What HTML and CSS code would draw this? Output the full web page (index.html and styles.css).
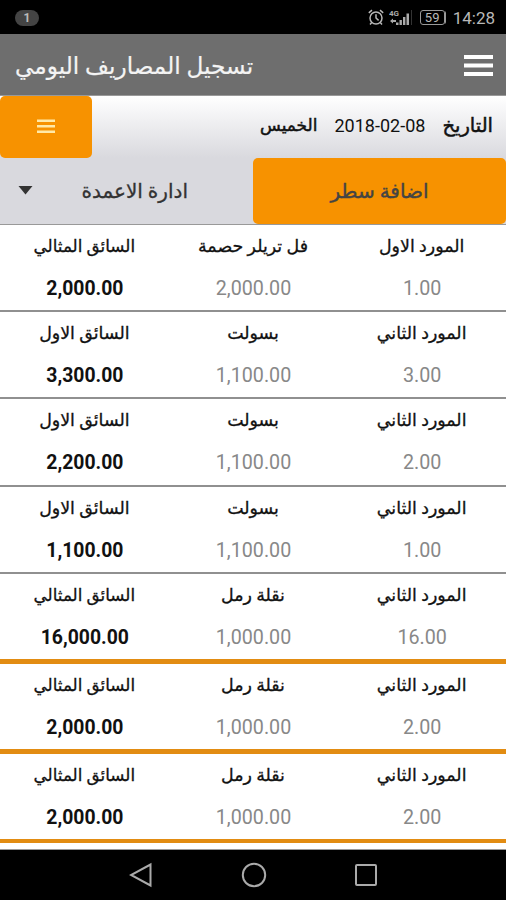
FILE: index.html
```html
<!DOCTYPE html>
<html lang="ar">

<head>
  <meta charset="UTF-8" />
  <meta name="viewport" content="width=device-width, initial-scale=1.0" />
  <title>تسجيل المصاريف اليومي</title>
  <link rel="stylesheet" href="styles.css">
</head>

<body>

  <div class="status-bar">
    <span class="notif-count">1</span>
    <div class="status-icons">
      <svg class="alarm-icon" width="16" height="17" viewBox="0 0 16 17" fill="none" stroke="#b8b8b8" stroke-width="1.5">
        <circle cx="8" cy="9" r="6" />
        <path d="M8 5.200V9l2.600 2.400M.8 3.800L4 1.200M12 1.200l3.200 2.600M3.700 13.500L2 15.500M12.300 13.500l1.700 2" />
      </svg>
      <svg class="signal-icon" width="24" height="17" viewBox="0 0 24 17">
        <text class="net-type" x="0" y="6.500">4G</text>
        <path fill="#aaa" d="M1 12l3-2.500V11h3v2H4v1.500zM7 13.500h2.500V16H7zM10.500 11h2.400v5h-2.400zM14 8h2.400v8H14zM17.500 4.500H20V16h-2.500z" />
        <path fill="#333" d="M22 1h1v15h-1z" />
      </svg>
      <div class="battery">59</div>
      <span class="clock">14:28</span>
    </div>
  </div>

  <div class="app-bar">
    <h1 dir="rtl">تسجيل المصاريف اليومي</h1>
    <button class="menu-btn">
      <svg width="29" height="24" viewBox="0 0 29 24" fill="#fff">
        <path d="M0 1h29v4H0zM0 9.500h29v4H0zM0 18h29v4H0z" />
      </svg>
    </button>
  </div>

  <div class="date-bar" dir="rtl">
    <span class="date-label">التاريخ</span>
    <span class="date-value">2018-02-08</span>
    <span class="date-day">الخميس</span>
    <button class="list-btn">
      <svg width="18" height="15" viewBox="0 0 18 15" fill="#ffe9a8">
        <path d="M0 .5h18V3H0zM0 6h18v2.500H0zM0 11.500h18V14H0z" />
      </svg>
    </button>
  </div>

  <div class="actions" dir="rtl">
    <button class="add-btn">اضافة سطر</button>
    <button class="columns-btn">
      <span>ادارة الاعمدة</span>
      <svg width="15" height="12" viewBox="0 0 15 12"><path fill="#333" d="M.5 1h14l-7 8.500z" /></svg>
    </button>
  </div>

  <div class="rows" dir="rtl">
    <div class="row">
      <div class="cell"><p>المورد الاول</p><span>1.00</span></div>
      <div class="cell"><p>فل تريلر حصمة</p><span>2,000.00</span></div>
      <div class="cell total"><p class="long">السائق المثالي</p><span>2,000.00</span></div>
    </div>
    <div class="row">
      <div class="cell"><p>المورد الثاني</p><span>3.00</span></div>
      <div class="cell"><p>بسولت</p><span>1,100.00</span></div>
      <div class="cell total"><p>السائق الاول</p><span>3,300.00</span></div>
    </div>
    <div class="row">
      <div class="cell"><p>المورد الثاني</p><span>2.00</span></div>
      <div class="cell"><p>بسولت</p><span>1,100.00</span></div>
      <div class="cell total"><p>السائق الاول</p><span>2,200.00</span></div>
    </div>
    <div class="row">
      <div class="cell"><p>المورد الثاني</p><span>1.00</span></div>
      <div class="cell"><p>بسولت</p><span>1,100.00</span></div>
      <div class="cell total"><p>السائق الاول</p><span>1,100.00</span></div>
    </div>
    <div class="row marked">
      <div class="cell"><p>المورد الثاني</p><span>16.00</span></div>
      <div class="cell"><p>نقلة رمل</p><span>1,000.00</span></div>
      <div class="cell total"><p class="long">السائق المثالي</p><span>16,000.00</span></div>
    </div>
    <div class="row marked">
      <div class="cell"><p>المورد الثاني</p><span>2.00</span></div>
      <div class="cell"><p>نقلة رمل</p><span>1,000.00</span></div>
      <div class="cell total"><p class="long">السائق المثالي</p><span>2,000.00</span></div>
    </div>
    <div class="row marked">
      <div class="cell"><p>المورد الثاني</p><span>2.00</span></div>
      <div class="cell"><p>نقلة رمل</p><span>1,000.00</span></div>
      <div class="cell total"><p class="long">السائق المثالي</p><span>2,000.00</span></div>
    </div>
  </div>

  <div class="nav-bar">
    <svg width="24" height="26" viewBox="0 0 24 26" fill="none" stroke="#aaa" stroke-width="2"><path d="M21.500 2.500v21L2 13z" /></svg>
    <svg width="26" height="26" viewBox="0 0 26 26" fill="none" stroke="#aaa" stroke-width="2"><circle cx="13" cy="13" r="11.200" /></svg>
    <svg width="24" height="24" viewBox="0 0 24 24" fill="none" stroke="#aaa" stroke-width="2"><rect x="2" y="2" width="20" height="20" rx="1" /></svg>
  </div>

</body>

</html>
```
FILE: styles.css
```css
* {
  box-sizing: border-box;
}

body {
  margin: 0;
  width: 506px;
  height: 900px;
  overflow: hidden;
  display: flex;
  flex-direction: column;
  font-family: Roboto, "DejaVu Sans", sans-serif;
  background-color: white;
  color: #111;
}

button {
  border: none;
  padding: 0;
  background: none;
  font-family: inherit;
  display: flex;
  align-items: center;
  justify-content: center;
}

svg {
  display: block;
}

.status-bar {
  height: 34px;
  flex-shrink: 0;
  background-color: black;
  color: #b8b8b8;
  display: flex;
  justify-content: space-between;
  align-items: center;
  padding: 1px 11px 0 15px;
}

.notif-count {
  width: 24px;
  height: 16px;
  border-radius: 8px;
  background-color: #444;
  color: #bbb;
  font-size: 12px;
  font-weight: bold;
  line-height: 16px;
  text-align: center;
}

.status-icons {
  display: flex;
  align-items: center;
}

.signal-icon {
  margin-left: 5px;
}

.net-type {
  font-size: 8px;
  font-weight: bold;
  fill: #aaa;
}

.battery {
  width: 25px;
  height: 15px;
  margin: 0 8px 0 7px;
  border: 1px solid #999;
  border-radius: 3px;
  font-size: 13px;
  line-height: 13px;
  text-align: center;
  box-shadow: 2px 0 0 -1px #999;
}

.clock {
  font-size: 17px;
}

.app-bar {
  height: 62px;
  flex-shrink: 0;
  background-color: #6e6e6e;
  border-bottom: 1px solid #999;
  display: flex;
  justify-content: space-between;
  align-items: center;
  padding: 2px 13px 0 15px;
}

.app-bar h1 {
  margin: 0;
  color: #f4f4f4;
  font-size: 23.200px;
  font-weight: normal;
  white-space: nowrap;
  -webkit-text-stroke: 0.2px;
}

.date-bar {
  height: 62px;
  flex-shrink: 0;
  background: linear-gradient(#fff, #d9d9de);
  display: flex;
  align-items: center;
  padding-right: 13px;
  font-size: 18px;
  white-space: nowrap;
}

.date-value {
  margin: 0 17px;
  padding-bottom: 4px;
}

.date-label,
.date-day {
  font-size: 17px;
  padding-bottom: 4px;
  -webkit-text-stroke: 0.5px;
}

.date-label {
  font-size: 19.500px;
}

.list-btn {
  width: 92px;
  height: 62px;
  margin-right: auto;
  padding-bottom: 1px;
  border-radius: 5px;
  background-color: #f79200;
}

.actions {
  height: 67px;
  flex-shrink: 0;
  display: flex;
  background-color: #d9d9de;
  border-bottom: 1px solid #999;
}

.add-btn {
  width: 253px;
  border-radius: 5px;
  background-color: #f79200;
  color: #444;
  font-size: 20px;
  -webkit-text-stroke: 0.4px;
}

.columns-btn {
  flex: 1;
  justify-content: space-between;
  padding: 0 65px 0 18px;
  color: #333;
  font-size: 20px;
  -webkit-text-stroke: 0.3px;
}

.rows {
  flex: 1;
  border-bottom: 1px solid #999;
}

.row {
  height: 87.200px;
  display: grid;
  grid-template-columns: repeat(3, 1fr);
  border-bottom: 2px solid #909090;
}

.row.marked {
  height: 90px;
  border-bottom: 5px solid #e28c12;
}

.row.marked:last-child {
  height: 89px;
  border-bottom-width: 4px;
}

.cell {
  text-align: center;
  color: #888;
  font-size: 19.700px;
}

.cell p {
  margin: 0;
  height: 42px;
  line-height: 43px;
  color: #111;
  font-size: 17.400px;
  white-space: nowrap;
  -webkit-text-stroke: 0.3px;
}

.cell p.long {
  font-size: 16.800px;
}

.cell span {
  display: block;
  padding-left: 1px;
  line-height: 43px;
}

.cell.total span {
  color: #111;
  font-size: 19.400px;
  font-weight: bold;
}

.nav-bar {
  height: 50px;
  flex-shrink: 0;
  background-color: black;
  display: flex;
  justify-content: space-between;
  align-items: center;
  padding: 0 128px 0 129px;
}
```
